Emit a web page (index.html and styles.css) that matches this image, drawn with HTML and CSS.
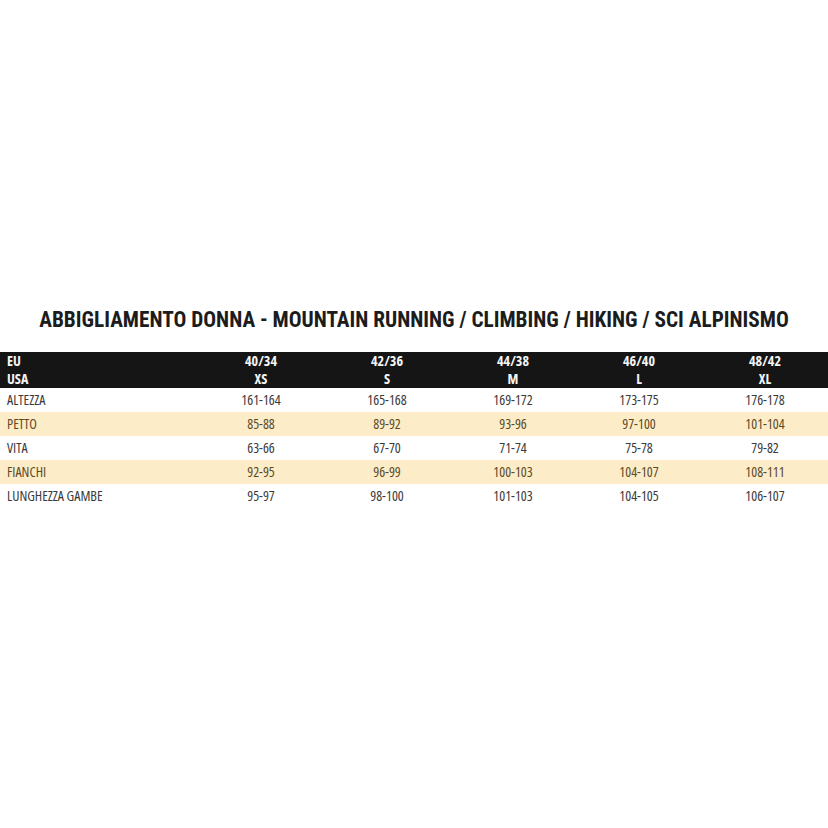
FILE: index.html
```html
<!DOCTYPE html>
<html>
<head>
<meta charset="utf-8">
<link rel="stylesheet" href="styles.css">
</head>
<body>
<main class="page">
  <h1 class="title">ABBIGLIAMENTO DONNA - MOUNTAIN RUNNING / CLIMBING / HIKING / SCI ALPINISMO</h1>
  <table class="sizes">
    <colgroup>
      <col class="col-label">
      <col class="col-size"><col class="col-size"><col class="col-size"><col class="col-size"><col class="col-size">
    </colgroup>
    <thead>
      <tr>
        <th class="label">EU<br>USA</th>
        <th>40/34<br>XS</th>
        <th>42/36<br>S</th>
        <th>44/38<br>M</th>
        <th>46/40<br>L</th>
        <th>48/42<br>XL</th>
      </tr>
    </thead>
    <tbody>
      <tr><td class="label">ALTEZZA</td><td>161-164</td><td>165-168</td><td>169-172</td><td>173-175</td><td>176-178</td></tr>
      <tr class="band"><td class="label">PETTO</td><td>85-88</td><td>89-92</td><td>93-96</td><td>97-100</td><td>101-104</td></tr>
      <tr><td class="label">VITA</td><td>63-66</td><td>67-70</td><td>71-74</td><td>75-78</td><td>79-82</td></tr>
      <tr class="band"><td class="label">FIANCHI</td><td>92-95</td><td>96-99</td><td>100-103</td><td>104-107</td><td>108-111</td></tr>
      <tr><td class="label">LUNGHEZZA GAMBE</td><td>95-97</td><td>98-100</td><td>101-103</td><td>104-105</td><td>106-107</td></tr>
    </tbody>
  </table>
</main>
</body>
</html>
```

FILE: styles.css
```css
html, body {
  margin: 0;
  padding: 0;
  background: #ffffff;
}
.page {
  width: 828px;
  height: 828px;
  display: flex;
  flex-direction: column;
  align-items: center;
  padding-top: 306px;
  box-sizing: border-box;
}
.title {
  margin: 0;
  font-family: "Roboto Condensed", Roboto, sans-serif;
  font-stretch: 75%;
  font-weight: 700;
  font-size: 21.3px;
  line-height: 28px;
  color: #1c1c1c;
  white-space: nowrap;
}
.sizes {
  margin-top: 18px;
  width: 828px;
  table-layout: fixed;
  border-collapse: collapse;
  font-family: "Open Sans", sans-serif;
  font-stretch: 75%;
  font-size: 14px;
  color: #3a3a3a;
}
.col-label { width: 198px; }
.col-size { width: 126px; }
.sizes th {
  background: #151515;
  color: #f4f4f4;
  font-weight: 700;
  line-height: 18px;
  padding: 0;
  height: 36px;
  box-sizing: border-box;
  text-align: center;
  vertical-align: top;
}
.sizes td {
  height: 24px;
  padding: 0;
  line-height: 24px;
  text-align: center;
}
.sizes .label {
  text-align: left;
  padding-left: 7px;
}
.sizes .band td {
  background: #fcedc8;
  color: #5b4a28;
}
```
